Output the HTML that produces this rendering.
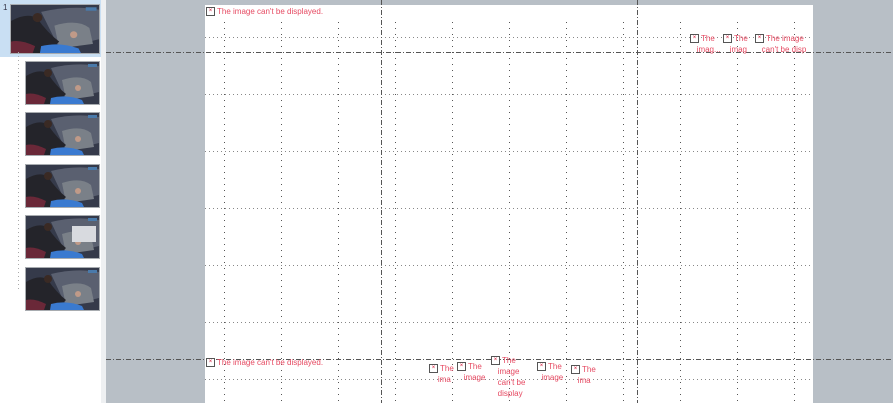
<!DOCTYPE html>
<html><head><meta charset="utf-8"><style>
*{margin:0;padding:0}
body{width:893px;height:403px;overflow:hidden;background:#fff;position:relative;font-family:"Liberation Sans","DejaVu Sans",sans-serif}
.gray{position:absolute;left:106px;top:0;width:787px;height:403px;background:#b8bfc6}
.strip{position:absolute;left:101px;top:0;width:5px;height:403px;background:#eef0f2}
.slide{position:absolute;left:205px;top:5px;width:608px;height:398px;background:#fff}
.sel{position:absolute;left:0;top:0;width:104px;height:57px;background:#c9dff3}
.th{position:absolute;border:1px solid #a8acb0;overflow:hidden}
.lbl{position:absolute;font-size:8px;color:#e64a62;line-height:11px}
.x{display:inline-block;width:7px;height:7px;border:1px solid #555;background:#fff;color:#d01030;font-size:6px;line-height:7px;text-align:center;vertical-align:top;margin-right:2px;margin-top:1px}
</style></head><body>
<div class="sel"></div>
<div style="position:absolute;left:3px;top:3px;font-size:8px;color:#334">1</div>
<div class="strip"></div>
<div class="gray"></div>
<div class="slide"></div>
<svg width="0" height="0" style="position:absolute"><defs>
<symbol id="ph" viewBox="0 0 73 42" preserveAspectRatio="none">
<rect width="73" height="42" fill="#353a4a"/>
<path d="M25 6 Q50 0 73 4 L73 30 L40 38 Z" fill="#5a6070"/>
<path d="M36 18 Q55 12 65 20 L68 34 L40 38Z" fill="#7a8088"/>
<path d="M0 14 Q14 6 22 12 Q30 24 40 32 L30 42 L0 42Z" fill="#24242a"/>
<circle cx="22" cy="11" r="4" fill="#3a2a24"/>
<circle cx="52" cy="26" r="3" fill="#c09a88"/>
<path d="M0 32 Q8 30 20 36 L18 42 L0 42Z" fill="#6a2838"/>
<path d="M25 36 Q40 32 56 38 L58 42 L24 42Z" fill="#3a7ad0"/>
<rect x="62" y="2" width="9" height="3" fill="#4a7aaa"/>
</symbol></defs></svg>
<svg class="th" style="left:10px;top:4px;width:88px;height:48px"><use href="#ph" width="88" height="48"/></svg>
<svg class="th" style="left:25px;top:61px;width:73px;height:42px"><use href="#ph" width="73" height="42"/></svg>
<svg class="th" style="left:25px;top:112px;width:73px;height:42px"><use href="#ph" width="73" height="42"/></svg>
<svg class="th" style="left:25px;top:164px;width:73px;height:42px"><use href="#ph" width="73" height="42"/></svg>
<svg class="th" style="left:25px;top:215px;width:73px;height:42px"><use href="#ph" width="73" height="42"/><rect x="46" y="10" width="24" height="16" fill="#d8dadf"/></svg>
<svg class="th" style="left:25px;top:267px;width:73px;height:42px"><use href="#ph" width="73" height="42"/></svg>
<svg style="position:absolute;left:0;top:0" width="893" height="403">
<g stroke="#aaa" stroke-dasharray="1 3" stroke-width="1">
<line x1="18.5" y1="52" x2="18.5" y2="290"/>
</g>
<g stroke="#555" stroke-dasharray="1 5" stroke-width="1">
<line x1="224.5" y1="22" x2="224.5" y2="403"/><line x1="281.5" y1="22" x2="281.5" y2="403"/>
<line x1="338.5" y1="22" x2="338.5" y2="403"/><line x1="395.5" y1="22" x2="395.5" y2="403"/>
<line x1="452.5" y1="22" x2="452.5" y2="403"/><line x1="509.5" y1="22" x2="509.5" y2="403"/>
<line x1="566.5" y1="22" x2="566.5" y2="403"/><line x1="623.5" y1="22" x2="623.5" y2="403"/>
<line x1="680.5" y1="22" x2="680.5" y2="403"/><line x1="737.5" y1="22" x2="737.5" y2="403"/>
<line x1="794.5" y1="22" x2="794.5" y2="403"/>
</g>
<g stroke="#888" stroke-dasharray="1 3" stroke-width="1">
<line x1="205" y1="37.5" x2="813" y2="37.5"/><line x1="205" y1="94.5" x2="813" y2="94.5"/>
<line x1="205" y1="151.5" x2="813" y2="151.5"/><line x1="205" y1="208.5" x2="813" y2="208.5"/>
<line x1="205" y1="265.5" x2="813" y2="265.5"/><line x1="205" y1="322.5" x2="813" y2="322.5"/>
<line x1="205" y1="379.5" x2="813" y2="379.5"/>
</g>
<g stroke="#555" stroke-dasharray="5 2 1 2" stroke-width="1">
<line x1="106" y1="52.5" x2="893" y2="52.5"/><line x1="106" y1="359.5" x2="893" y2="359.5"/>
<line x1="381.5" y1="0" x2="381.5" y2="403"/><line x1="637.5" y1="0" x2="637.5" y2="403"/>
</g>
</svg>
<div class="lbl" style="left:206px;top:6px"><span class="x">×</span>The image can't be displayed.</div>
<div class="lbl" style="left:206px;top:357px"><span class="x">×</span>The image can't be displayed.</div>
<div class="lbl" style="left:690px;top:33px;width:30px"><span class="x">×</span>The<br>&nbsp;&nbsp;&nbsp;imag...</div>
<div class="lbl" style="left:723px;top:33px;width:30px"><span class="x">×</span>The<br>&nbsp;&nbsp;&nbsp;imag</div>
<div class="lbl" style="left:755px;top:33px;width:58px;overflow:hidden;white-space:nowrap"><span class="x">×</span>The image<br>&nbsp;&nbsp;&nbsp;can't be disp</div>
<div class="lbl" style="left:429px;top:363px"><span class="x">×</span>The<br>&nbsp;&nbsp;&nbsp;&nbsp;ima</div>
<div class="lbl" style="left:457px;top:361px"><span class="x">×</span>The<br>&nbsp;&nbsp;&nbsp;image</div>
<div class="lbl" style="left:491px;top:355px;height:48px;overflow:hidden"><span class="x">×</span>The<br>&nbsp;&nbsp;&nbsp;image<br>&nbsp;&nbsp;&nbsp;can't be<br>&nbsp;&nbsp;&nbsp;display</div>
<div class="lbl" style="left:537px;top:361px"><span class="x">×</span>The<br>&nbsp;&nbsp;image</div>
<div class="lbl" style="left:571px;top:364px"><span class="x">×</span>The<br>&nbsp;&nbsp;&nbsp;ima</div>
</body></html>
